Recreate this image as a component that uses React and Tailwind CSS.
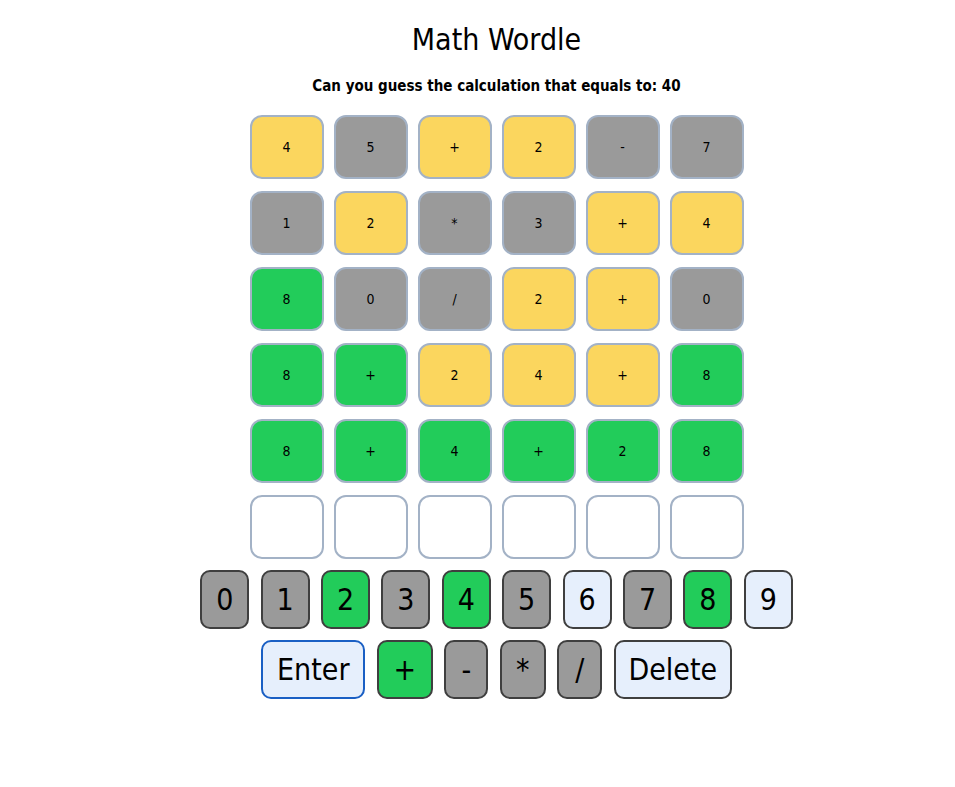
import React from "react";

const tileColors = {
  y: "bg-[#fbd65e]",
  g: "bg-[#9a9a9a]",
  G: "bg-[#22cc5a]",
  e: "bg-white",
};

const guesses = [
  ["4y", "5g", "+y", "2y", "-g", "7g"],
  ["1g", "2y", "*g", "3g", "+y", "4y"],
  ["8G", "0g", "/g", "2y", "+y", "0g"],
  ["8G", "+G", "2y", "4y", "+y", "8G"],
  ["8G", "+G", "4G", "+G", "2G", "8G"],
  [" e", " e", " e", " e", " e", " e"],
];

const keyColors = {
  g: "bg-[#9a9a9a] border-[#3f3f3f]",
  G: "bg-[#22cc5a] border-[#3f3f3f]",
  l: "bg-[#e6effc] border-[#3f3f3f]",
  b: "bg-[#e6effc] border-[#1a5fc4]",
};

const digitKeys = [
  { k: "0", c: "g", w: "w-[49px]" },
  { k: "1", c: "g", w: "w-[49px]" },
  { k: "2", c: "G", w: "w-[49px]" },
  { k: "3", c: "g", w: "w-[49px]" },
  { k: "4", c: "G", w: "w-[49px]" },
  { k: "5", c: "g", w: "w-[49px]" },
  { k: "6", c: "l", w: "w-[49px]" },
  { k: "7", c: "g", w: "w-[49px]" },
  { k: "8", c: "G", w: "w-[49px]" },
  { k: "9", c: "l", w: "w-[49px]" },
];

const actionKeys = [
  { k: "Enter", c: "b", w: "w-[104px]" },
  { k: "+", c: "G", w: "w-[56px]" },
  { k: "-", c: "g", w: "w-[44px]" },
  { k: "*", c: "g", w: "w-[46px]" },
  { k: "/", c: "g", w: "w-[45px]" },
  { k: "Delete", c: "l", w: "w-[118px]" },
];

const Key = ({ k, c, w }) => (
  <button
    type="button"
    className={`${w} h-[59px] rounded-[10px] border-2 ${keyColors[c]} text-[30px] leading-none text-black flex items-center justify-center`}
  >
    {k}
  </button>
);

const App = () => {
  return (
    <div className="min-h-screen bg-white pl-[38px] flex flex-col items-center text-black font-['Tahoma','DejaVu_Sans_Condensed','DejaVu_Sans',sans-serif]">
      <h1 className="mt-[22px] text-[30px] leading-[36px]">Math Wordle</h1>
      <p className="mt-[18px] text-[15px] leading-[20px] font-bold">
        Can you guess the calculation that equals to: 40
      </p>

      <div className="mt-[19px] grid grid-cols-6 gap-x-[10px] gap-y-[12px]">
        {guesses.flat().map((cell, i) => (
          <div
            key={i}
            className={`w-[74px] h-[64px] rounded-xl border-2 border-[#a3b2c6] ${tileColors[cell[1]]} flex items-center justify-center text-[14px]`}
          >
            {cell[0].trim()}
          </div>
        ))}
      </div>

      <div className="mt-[11px] flex gap-[11.4px]">
        {digitKeys.map((key) => (
          <Key key={key.k} {...key} />
        ))}
      </div>
      <div className="mt-[11px] flex gap-[11.5px]">
        {actionKeys.map((key) => (
          <Key key={key.k} {...key} />
        ))}
      </div>
    </div>
  );
};

export default App;
